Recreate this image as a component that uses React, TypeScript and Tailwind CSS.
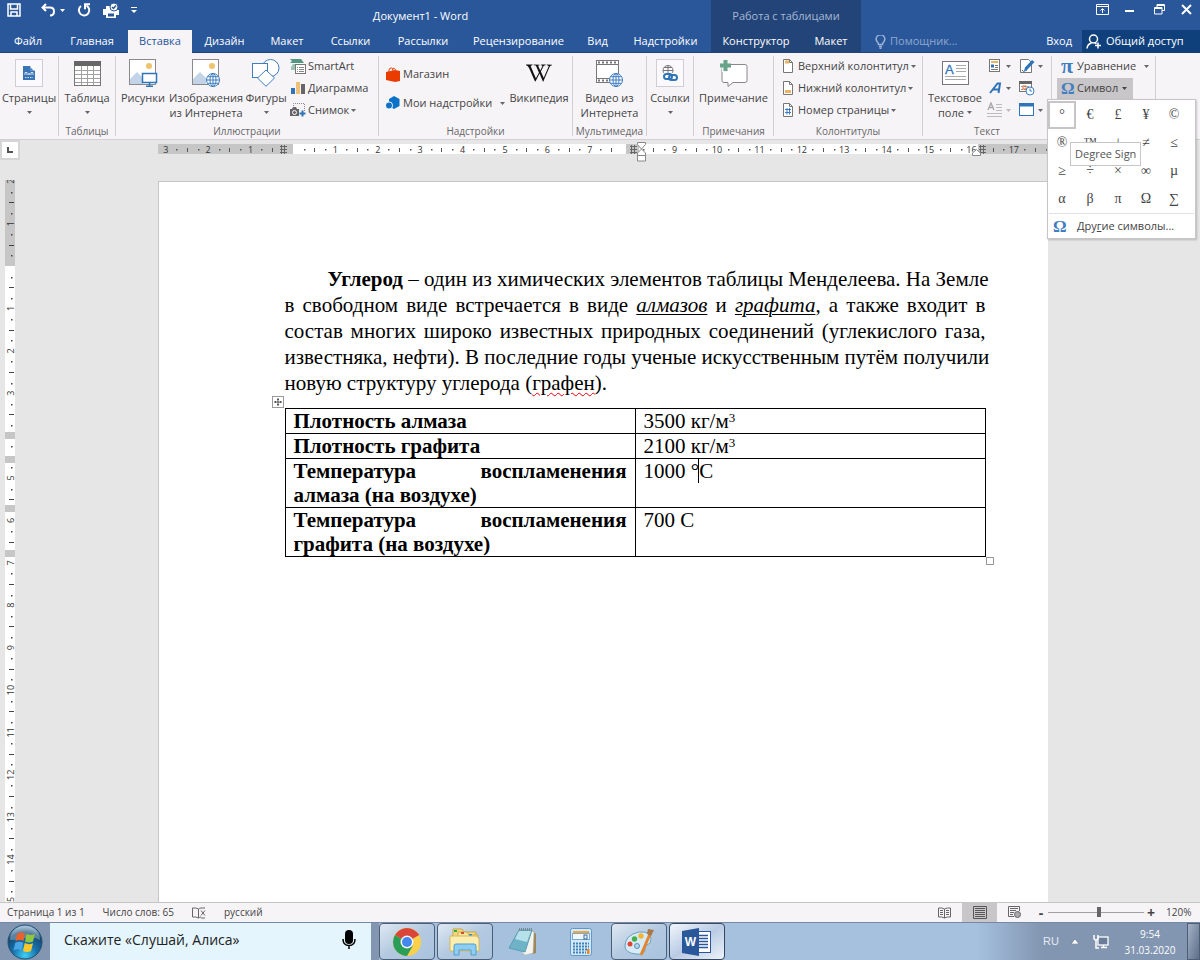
import type { ReactNode } from 'react'
import { FaWikipediaW } from 'react-icons/fa'

const tabs = [
  { name: 'Файл', width: 'w-[56px]' },
  { name: 'Главная', width: 'w-[72px]' },
  { name: 'Вставка', width: 'w-[64px]' },
  { name: 'Дизайн', width: 'w-[65px]' },
  { name: 'Макет', width: 'w-[60px]' },
  { name: 'Ссылки', width: 'w-[67px]' },
  { name: 'Рассылки', width: 'w-[78px]' },
  { name: 'Рецензирование', width: 'w-[113px]' },
  { name: 'Вид', width: 'w-[45px]' },
  { name: 'Надстройки', width: 'w-[91px]' },
]

const symbols = ['°', '€', '£', '¥', '©', '®', '™', '±', '≠', '≤', '≥', '÷', '×', '∞', 'µ', 'α', 'β', 'π', 'Ω', '∑']

const CM = 42.4

function Caret({ className = 'text-[#666]' }: { className?: string }) {
  return (
    <svg width="5" height="3" viewBox="0 0 5 3" className={`shrink-0 ${className}`} aria-hidden="true">
      <path d="M0 0h5L2.5 3z" fill="currentColor" />
    </svg>
  )
}

/* ---------- ribbon icons ---------- */

function PageIcon() {
  return (
    <span className="flex size-7 items-center justify-center border border-[#d0ced2] bg-[#fbf9fc]">
      <svg width="12" height="14" viewBox="0 0 12 14">
        <path d="M0 0h7l5 5v9H0z" fill="#3a75b5" />
        <path d="M7.5 0v4.5H12z" fill="#fff" />
        <path d="M7.5 1.5v3h3z" fill="#3a75b5" />
        <path d="M2 9V6.500h2V9M5 9l1-2 1 2M8 9V6.500h2V9" stroke="#cfe0f2" fill="none" />
        <path d="M2 11.500h8" stroke="#cfe0f2" strokeDasharray="1.500 1" />
      </svg>
    </span>
  )
}

function TableIcon() {
  return (
    <svg width="27" height="25" viewBox="0 0 27 25">
      <rect x="0.500" y="0.500" width="26" height="24" fill="#fff" stroke="#777" />
      <rect width="27" height="5" fill="#666" />
      <path d="M1 9.500h25M1 13.500h25M1 17.500h25M1 21.500h25M7.500 5v19M13.500 5v19M19.500 5v19" stroke="#a0a0a0" />
    </svg>
  )
}

function GlobeIcon({ x, y }: { x: number; y: number }) {
  return (
    <g transform={`translate(${x} ${y})`} stroke="#3f7ec0" fill="none">
      <circle cx="7" cy="7" r="6.500" fill="#fff" />
      <ellipse cx="7" cy="7" rx="3" ry="6.500" />
      <path d="M7 .5v13M.5 7h13M1.500 3.700h11M1.500 10.300h11" />
    </g>
  )
}

function PictureIcon({ online = false }: { online?: boolean }) {
  return (
    <svg width="29" height="28" viewBox="0 0 29 28">
      <rect x="0.500" y="0.500" width="26" height="25" fill="#fff" stroke="#8a8a8a" />
      <path d="M1 25v-5l7-7 6 6v6z" fill="#c3d4e8" />
      <circle cx="20" cy="7" r="3" fill="#efc36c" />
      {online ? (
        <GlobeIcon x={14} y={14} />
      ) : (
        <g>
          <rect x="13.500" y="14.500" width="14" height="9" fill="#fff" stroke="#2f74b8" strokeWidth="1.500" />
          <path d="M20.500 24v3M17 27.200h7" stroke="#2f74b8" strokeWidth="1.500" />
        </g>
      )}
    </svg>
  )
}

function ShapesIcon() {
  return (
    <svg width="28" height="28" viewBox="0 0 28 28" fill="#fff" stroke="#3f7ec0">
      <circle cx="18.500" cy="9" r="8.500" />
      <rect x="0.500" y="4.500" width="15" height="14" />
      <path d="M14 11l8.500 8L14 27.300 5.500 19z" />
    </svg>
  )
}

function SmartArtIcon() {
  return (
    <svg width="16" height="16" viewBox="0 0 16 16">
      <path d="M0 1h11l3 4H0l2-2z" fill="#52977e" />
      <path d="M1 9l2-3h4v6H1z" fill="#9cc5b3" />
      <rect x="5.500" y="6.500" width="10" height="9" fill="#fff" stroke="#777" />
      <path d="M7 9.500h1m1 0h5M7 11.500h1m1 0h5M7 13.500h1m1 0h5" stroke="#888" />
    </svg>
  )
}

function ChartIcon() {
  return (
    <svg width="16" height="14" viewBox="0 0 16 14">
      <rect x="1" y="7" width="4" height="6" fill="#2f74b8" />
      <rect x="6" y="1" width="4" height="12" fill="#efc07a" />
      <rect x="11" y="3" width="4" height="10" fill="#666" />
    </svg>
  )
}

function ScreenshotIcon() {
  return (
    <svg width="16" height="14" viewBox="0 0 16 14">
      <path d="M3.500 5V.5h11V8" fill="none" stroke="#888" strokeDasharray="1 1" />
      <path d="M0 6h2l1-2h3l1 2h2v7H0z" fill="#666" />
      <circle cx="4.500" cy="9.500" r="2" fill="#666" stroke="#fff" />
      <path d="M12.500 7.500v6M9.500 10.500h6" stroke="#2f74b8" strokeWidth="2" />
    </svg>
  )
}

function StoreIcon() {
  return (
    <svg width="14" height="15" viewBox="0 0 14 15">
      <path d="M0 5l9-2 5 1v10l-5 1-9-2z" fill="#eb3c00" />
      <path d="M3 5V3q0-2 2.500-2Q7 1 7 4M6 2q3-2 3.500 1.500" fill="none" stroke="#eb3c00" />
    </svg>
  )
}

function AddinsIcon() {
  return (
    <svg width="14" height="14" viewBox="0 0 14 14">
      <path d="M8 0l5.500 3v7L8 13 3 10V3z" fill="#0b72c8" />
      <circle cx="3" cy="9.500" r="3.600" fill="#0b72c8" stroke="#f7f4f8" />
    </svg>
  )
}

function VideoIcon() {
  return (
    <svg width="28" height="28" viewBox="0 0 28 28">
      <rect x="0.500" y="1.500" width="22" height="22" fill="#fff" stroke="#777" />
      <path d="M1 5.500h21M1 19.500h21" stroke="#777" />
      <path d="M2 3.500h20M2 21.500h20" stroke="#777" strokeWidth="2" strokeDasharray="2 2" />
      <GlobeIcon x={13} y={14} />
    </svg>
  )
}

function LinksIcon() {
  return (
    <span className="flex size-7 items-center justify-center border border-[#d0ced2] bg-[#fbf9fc]">
      <svg width="16" height="16" viewBox="0 0 16 16" fill="none">
        <circle cx="6" cy="5.500" r="5" stroke="#777" />
        <path d="M6 .5v10M1 5.500h10M2 2.500h8M2 8.500h8" stroke="#777" />
        <path d="M1 8h15v8H1z" fill="#fbf9fc" />
        <rect x="2" y="9" width="8" height="5" rx="2.500" stroke="#2f74b8" strokeWidth="2" />
        <rect x="7" y="10" width="8" height="5" rx="2.500" stroke="#2f74b8" strokeWidth="2" />
      </svg>
    </span>
  )
}

function CommentIcon() {
  return (
    <svg width="30" height="28" viewBox="0 0 30 28">
      <path d="M4 5.500h22q2 0 2 2v14q0 2-2 2H14l-5 4v-4H5q-2 0-2-2v-14z" fill="#fff" stroke="#888" />
      <path d="M6 0v13M0 6.500h12" stroke="#f7f4f8" strokeWidth="6" />
      <path d="M6.500 1v11M1 6.500h11" stroke="#66a48c" strokeWidth="4" />
    </svg>
  )
}

function SheetIcon({ kind }: { kind: 'header' | 'footer' | 'number' }) {
  return (
    <svg width="12" height="14" viewBox="0 0 12 14">
      <path d="M1.500.5h6l3 3v10h-9z" fill="#fff" stroke="#777" />
      <path d="M7.500.5v3h3" fill="none" stroke="#777" />
      {kind === 'header' && <path d="M3 3h4" stroke="#e9b561" strokeWidth="3" />}
      {kind === 'footer' && <path d="M3 10.500h6" stroke="#e9b561" strokeWidth="3" />}
      {kind === 'number' && <path d="M3 6.500h6M3 9.500h6M5 5v6.500M7.500 5v6.500" stroke="#3f7ec0" />}
    </svg>
  )
}

function TextBoxIcon() {
  return (
    <svg width="27" height="24" viewBox="0 0 27 24">
      <rect x="0.500" y="0.500" width="26" height="23" fill="#fff" stroke="#777" />
      <path d="M14 4.500h10M14 7.500h10M14 10.500h10M3 15.500h21M3 18.500h21" stroke="#aaa" />
      <text x="3" y="13" fontSize="13" fill="#2f74b8" stroke="#2f74b8" strokeWidth="0.300" fontFamily="Liberation Sans, sans-serif">A</text>
    </svg>
  )
}

function QuickPartsIcon() {
  return (
    <svg width="12" height="14" viewBox="0 0 12 14">
      <rect x="0.500" y="0.500" width="10" height="12" fill="#fff" stroke="#777" />
      <path d="M2 3h7" stroke="#e9b561" strokeWidth="2" />
      <path d="M2 7h3" stroke="#2f74b8" strokeWidth="3" />
      <path d="M6 6.500h3M6 8.500h3M2 10.500h7" stroke="#777" />
    </svg>
  )
}

function SignatureIcon() {
  return (
    <svg width="16" height="16" viewBox="0 0 16 16">
      <path d="M1.500 1.500h8l3 3v10h-11z" fill="#fff" stroke="#777" />
      <path d="M5 13l1-3.500L13 2l2.500 2L8 12z" fill="#2f74b8" />
      <path d="M3 12l1.500 1.500L8 12" fill="none" stroke="#2f74b8" />
    </svg>
  )
}

function DateIcon() {
  return (
    <svg width="16" height="16" viewBox="0 0 16 16">
      <rect x="0.500" y="1.500" width="12" height="10" fill="#fff" stroke="#777" />
      <path d="M0 2.500h13" stroke="#666" strokeWidth="3" />
      <path d="M2 6.500h9M2 9.500h6" stroke="#999" strokeDasharray="2 1" />
      <rect x="4" y="6" width="3" height="3" fill="none" stroke="#e07038" />
      <circle cx="11" cy="11" r="4" fill="#fff" stroke="#3f7ec0" />
      <path d="M11 8.500V11h2" fill="none" stroke="#3f7ec0" />
    </svg>
  )
}

function WordArtIcon() {
  return (
    <svg width="13" height="14" viewBox="0 0 13 14">
      <path d="M1 12L8.500 2.500H11L9.500 12M3.500 8.500H10" fill="none" stroke="#2f74b8" strokeWidth="2" />
    </svg>
  )
}

function DropCapIcon() {
  return (
    <svg width="16" height="16" viewBox="0 0 16 16">
      <path d="M1 8l3-7 3 7M2 5.500h4" fill="none" stroke="#a5a5a5" strokeWidth="1.300" />
      <path d="M9 2.500h6M9 5.500h6M9 8.500h6M0 11.500h15M0 14.500h15" stroke="#bcbcbc" />
    </svg>
  )
}

function ObjectIcon() {
  return (
    <svg width="16" height="14" viewBox="0 0 16 14">
      <rect x="0.500" y="0.500" width="14" height="12" fill="#fff" stroke="#2f74b8" />
      <path d="M0 2h15" stroke="#2f74b8" strokeWidth="3" />
    </svg>
  )
}

/* ---------- ribbon building blocks ---------- */

function Group({ label, className, children }: { label: string; className: string; children: ReactNode }) {
  return (
    <section className={`flex h-20 shrink-0 flex-col border-r border-[#d2cfd3] ${className}`}>
      <div className="flex flex-1">{children}</div>
      <div className="text-center text-[10px] leading-[10px] whitespace-nowrap text-[#666]">{label}</div>
    </section>
  )
}

interface BigButtonProps {
  icon: ReactNode
  lines: string[]
  className: string
  caret?: 'below' | 'inline'
}

function BigButton({ icon, lines, className, caret }: BigButtonProps) {
  return (
    <button className={`flex shrink-0 flex-col items-center ${className}`}>
      <span className="flex h-[34px] shrink-0 items-center justify-center">{icon}</span>
      {lines.map((line, i) => (
        <span key={line} className="flex items-center gap-[3px] leading-[15px] whitespace-nowrap">
          {line}
          {caret === 'inline' && i === lines.length - 1 && <Caret />}
        </span>
      ))}
      {caret === 'below' && <span className="flex h-[15px] items-center"><Caret /></span>}
    </button>
  )
}

function SmallButton({ icon, label, caret = false }: { icon: ReactNode; label: string; caret?: boolean }) {
  return (
    <button className="flex h-5 items-center gap-[2px] whitespace-nowrap">
      <span className="flex w-4 justify-center">{icon}</span>
      {label}
      {caret && <Caret />}
    </button>
  )
}

function IconButton({ icon, label, caret = true, faded = false }: { icon: ReactNode; label: string; caret?: boolean; faded?: boolean }) {
  return (
    <button aria-label={label} className="flex h-5 w-8 items-center justify-between pr-2">
      <span className="flex w-4 justify-center">{icon}</span>
      {caret && <Caret className={faded ? 'text-[#bbb]' : 'text-[#666]'} />}
    </button>
  )
}

/* ---------- header ---------- */

function QuickAccess() {
  return (
    <div className="flex w-[130px] items-start gap-3 pt-[3px] pl-[7px]">
      <button aria-label="Сохранить">
        <svg width="14" height="14" viewBox="0 0 14 14" fill="none" stroke="#fff" strokeWidth="1.500">
          <path d="M1 1h12v12H1zM3.500 1v5h7V1M4 13V9h6v4" />
        </svg>
      </button>
      <button aria-label="Отменить" className="ml-2 flex items-center gap-1">
        <svg width="15" height="14" viewBox="0 0 15 14" fill="none" stroke="#fff" strokeWidth="2">
          <path d="M5 1L1.500 4.500 5 8M2 4.500h7q4 0 4 4t-4 4" />
        </svg>
        <Caret className="text-white" />
      </button>
      <button aria-label="Повторить">
        <svg width="14" height="14" viewBox="0 0 14 14" fill="none" stroke="#fff" strokeWidth="2">
          <path d="M4 3a5.200 5.200 0 1 0 5.500-.4M13 1.200H8v5" />
        </svg>
      </button>
      <button aria-label="Печать">
        <svg width="16" height="15" viewBox="0 0 16 15">
          <path d="M0 6h3V3h5v4h8v5h-3v3H3v-3H0z" fill="#fff" />
          <path d="M5 10.500h6v3H5z" fill="#2a579a" />
          <circle cx="11" cy="4" r="4" fill="#fff" stroke="#2a579a" />
          <path d="M9 4l1.500 1.500L13 2.500" fill="none" stroke="#2a579a" strokeWidth="1.500" />
        </svg>
      </button>
      <button aria-label="Настройка панели" className="pt-1">
        <svg width="6" height="7" viewBox="0 0 6 7" fill="#fff">
          <path d="M0 0h6v1H0zM0 3h6L3 6z" />
        </svg>
      </button>
    </div>
  )
}

function Header() {
  return (
    <header className="flex h-[53px] shrink-0 bg-[#2a579a] text-white">
      <div className="shrink-0">
        <div className="flex h-[30px]">
          <QuickAccess />
          <h1 className="flex-1 pt-2 text-center leading-4">Документ1 - Word</h1>
        </div>
        <nav className="flex h-[23px] shadow-[inset_0_-1px_0_#1e4480]">
          {tabs.map((tab) => (
            <button
              key={tab.name}
              className={`text-center ${tab.width} ${tab.name === 'Вставка' ? 'bg-[#f7f4f8] text-[#2a579a]' : ''}`}
            >
              {tab.name}
            </button>
          ))}
        </nav>
      </div>
      <div className="w-[150px] shrink-0 bg-[#224478]">
        <div className="h-[30px] pt-2 text-center leading-4 text-[#a6b8d4]">Работа с таблицами</div>
        <div className="flex h-[23px]">
          <button className="w-[90px]">Конструктор</button>
          <button className="w-[60px]">Макет</button>
        </div>
      </div>
      <div className="flex min-w-0 flex-1 flex-col">
        <div className="flex h-[30px] items-start justify-end gap-4 pt-1 pr-2">
          <button aria-label="Параметры ленты">
            <svg width="13" height="11" viewBox="0 0 13 11" fill="none" stroke="#fff">
              <path d="M.5.5h12v10H.5zM.5 2.500h12M6.500 9V5M4.500 6.500l2-2 2 2" />
            </svg>
          </button>
          <button aria-label="Свернуть" className="pt-[6px]">
            <svg width="9" height="3" viewBox="0 0 9 3"><path d="M0 0h9v2H0z" fill="#fff" /></svg>
          </button>
          <button aria-label="Свернуть в окно" className="ml-1">
            <svg width="11" height="11" viewBox="0 0 11 11" fill="none" stroke="#fff">
              <path d="M3 3V.5h7.500v6H8M3 1.500h7M.5 3.500h7.500v6.500H.5zM.5 4.500H8" />
            </svg>
          </button>
          <button aria-label="Закрыть">
            <svg width="11" height="11" viewBox="0 0 11 11"><path d="M1 1l9 9M10 1l-9 9" stroke="#fff" strokeWidth="2" /></svg>
          </button>
        </div>
        <div className="flex h-[23px] items-center shadow-[inset_0_-1px_0_#1e4480]">
          <label className="flex flex-1 items-center gap-1 pl-[14px]">
            <svg width="11" height="14" viewBox="0 0 11 14" fill="none" stroke="#9fb4d4" strokeWidth="1.500">
              <path d="M3.500 9.500Q3.500 8 2 6.500 1 5 1.200 4A4.200 4.200 0 0 1 9.800 4Q10 5 9 6.500 7.500 8 7.500 9.500zM4 11.500h3M4.500 13.200h2" />
            </svg>
            <input
              aria-label="Помощник"
              placeholder="Помощник..."
              className="w-24 bg-transparent outline-none placeholder:text-[#8fa8cf]"
            />
          </label>
          <button className="px-[10px]">Вход</button>
          <button className="flex h-full w-[118px] items-center gap-1 bg-[#10407c] pl-1 whitespace-nowrap">
            <svg width="16" height="15" viewBox="0 0 16 15" fill="none" stroke="#fff" strokeWidth="1.500">
              <circle cx="7.500" cy="5" r="4" />
              <path d="M1 14.500q.5-4.500 4.500-5.500M9 9l1.500 1M12 8.500v6M9 11.500h6" />
            </svg>
            Общий доступ
          </button>
        </div>
      </div>
    </header>
  )
}

function SymbolMenu() {
  return (
    <div className="absolute top-[21px] -left-[10px] z-20 w-[149px] border border-[#c6c6c6] bg-white shadow-[1px_1px_2px_#0003]">
      <div className="grid grid-cols-[repeat(5,28px)] pt-px font-['Liberation_Serif',serif] text-[14px]">
        {symbols.map((s) => (
          <button
            key={s}
            className={`h-7 leading-none text-[#444] ${s === '°' ? 'border-2 border-[#c6c6c6] bg-white' : ''}`}
          >
            {s}
          </button>
        ))}
      </div>
      <button className="mx-px flex h-[25px] w-[145px] items-center border-t border-[#e1e1e1] pl-1">
        <span className="w-6 text-left font-['Liberation_Serif',serif] text-[17px] leading-none font-bold text-[#3f7ec0]">Ω</span>
        <span>Дру<u>г</u>ие символы...</span>
      </button>
      <div role="tooltip" className="absolute top-[42px] left-[22px] border border-[#c6c6c6] bg-white px-1 py-[3px] leading-4 whitespace-nowrap text-[#555]">
        Degree Sign
      </div>
    </div>
  )
}

function Ribbon() {
  return (
    <div className="flex h-[87px] shrink-0 border-b border-[#d2d0d3] bg-[#f7f4f8] pt-[3px] text-[#444]">
      <Group label="" className="w-[59px]">
        <BigButton icon={<PageIcon />} lines={['Страницы']} caret="below" className="w-[58px]" />
      </Group>
      <Group label="Таблицы" className="w-[57px]">
        <BigButton icon={<TableIcon />} lines={['Таблица']} caret="below" className="w-[56px]" />
      </Group>
      <Group label="Иллюстрации" className="w-[263px]">
        <BigButton icon={<PictureIcon />} lines={['Рисунки']} className="w-[54px]" />
        <BigButton icon={<PictureIcon online />} lines={['Изображения', 'из Интернета']} className="w-[72px]" />
        <BigButton icon={<ShapesIcon />} lines={['Фигуры']} caret="below" className="w-[48px]" />
        <div className="flex flex-col gap-[2px]">
          <SmallButton icon={<SmartArtIcon />} label="SmartArt" />
          <SmallButton icon={<ChartIcon />} label="Диаграмма" />
          <SmallButton icon={<ScreenshotIcon />} label="Снимок" caret />
        </div>
      </Group>
      <Group label="Надстройки" className="w-[194px]">
        <div className="flex w-[130px] flex-col gap-[9px] pt-2 pl-[6px]">
          <SmallButton icon={<StoreIcon />} label="Магазин" />
          <div className="flex items-center justify-between pr-1">
            <SmallButton icon={<AddinsIcon />} label="Мои надстройки" />
            <Caret />
          </div>
        </div>
        <BigButton icon={<FaWikipediaW size={26} color="#111" />} lines={['Википедия']} className="w-[60px]" />
      </Group>
      <Group label="Мультимедиа" className="w-[74px]">
        <BigButton icon={<VideoIcon />} lines={['Видео из', 'Интернета']} className="w-[73px]" />
      </Group>
      <Group label="" className="w-[47px]">
        <BigButton icon={<LinksIcon />} lines={['Ссылки']} caret="below" className="w-[46px]" />
      </Group>
      <Group label="Примечания" className="w-[80px]">
        <BigButton icon={<CommentIcon />} lines={['Примечание']} className="w-[79px]" />
      </Group>
      <Group label="Колонтитулы" className="w-[149px]">
        <div className="flex flex-col gap-[2px] pl-[6px]">
          <SmallButton icon={<SheetIcon kind="header" />} label="Верхний колонтитул" caret />
          <SmallButton icon={<SheetIcon kind="footer" />} label="Нижний колонтитул" caret />
          <SmallButton icon={<SheetIcon kind="number" />} label="Номер страницы" caret />
        </div>
      </Group>
      <Group label="Текст" className="w-[129px]">
        <BigButton icon={<TextBoxIcon />} lines={['Текстовое', 'поле']} caret="inline" className="w-[64px]" />
        <div className="grid grid-cols-2 grid-rows-[20px_20px_20px] gap-y-[2px]">
          <IconButton icon={<QuickPartsIcon />} label="Экспресс-блоки" />
          <IconButton icon={<SignatureIcon />} label="Строка подписи" />
          <IconButton icon={<WordArtIcon />} label="WordArt" />
          <IconButton icon={<DateIcon />} label="Дата и время" caret={false} />
          <IconButton icon={<DropCapIcon />} label="Буквица" faded />
          <IconButton icon={<ObjectIcon />} label="Объект" />
        </div>
      </Group>
      <Group label="" className="w-[104px]">
        <div className="flex flex-col gap-[2px] pl-[5px]">
          <button className="flex h-5 items-center gap-1 pl-1">
            <span className="w-3 font-['Liberation_Serif',serif] text-[22px] leading-none font-bold text-[#3f7ec0]">π</span>
            Уравнение
            <Caret className="ml-1 text-[#666]" />
          </button>
          <div className="relative">
            <button className="flex h-[21px] w-[76px] items-center gap-1 bg-[#c8c6c9] pl-1">
              <span className="w-3 font-['Liberation_Serif',serif] text-[17px] leading-none font-bold text-[#3f7ec0]">Ω</span>
              Символ
              <Caret className="text-[#444]" />
            </button>
            <SymbolMenu />
          </div>
        </div>
      </Group>
    </div>
  )
}

/* ---------- rulers ---------- */

interface RulerMark {
  pos: number
  kind: 'dot' | 'tick' | 'number'
  text?: string
}

function rulerMarks(zero: number, length: number, skip: number[]): RulerMark[] {
  const marks: RulerMark[] = []
  for (let q = -16; q < 80; q++) {
    const pos = zero + (q * CM) / 4
    if (q === 0 || pos < 1 || pos > length - 2 || skip.includes(q)) continue
    if (q % 4 === 0) marks.push({ pos, kind: 'number', text: String(Math.abs(q / 4)) })
    else marks.push({ pos, kind: q % 2 === 0 ? 'tick' : 'dot' })
  }
  return marks
}

function Grip({ x }: { x: number }) {
  return (
    <path d={`M${x} 6.500h7M${x} 9.500h7M${x} 12.500h7M${x + 1.5} 5v9M${x + 4.5} 5v9`} stroke="#666" fill="none" />
  )
}

function HorizontalRuler() {
  return (
    <svg width="890" height="22" viewBox="0 0 890 22" className="shrink-0">
      <rect y="4" width="135" height="10" fill="#c6c6c6" />
      <rect x="135" y="4" width="685" height="10" fill="#fff" />
      <rect x="468" y="4" width="13" height="10" fill="#c6c6c6" />
      <rect x="820" y="4" width="70" height="10" fill="#c6c6c6" />
      {rulerMarks(135, 890, [-1, 31, 32, 65]).map((m) =>
        m.kind === 'number' ? (
          <text key={m.pos} x={m.pos} y="13" textAnchor="middle" fontSize="9" fill="#333">{m.text}</text>
        ) : m.kind === 'tick' ? (
          <path key={m.pos} d={`M${Math.round(m.pos) + 0.5} 8v4`} stroke="#555" />
        ) : (
          <rect key={m.pos} x={Math.round(m.pos)} y="9" width="1.500" height="1.500" fill="#555" />
        ),
      )}
      <Grip x={122} />
      <Grip x={472} />
      <Grip x={821} />
      <path d="M479.500 2.500h8v2l-4 4.500 4 4v8h-8v-8l4-4-4-4.500zM479.500 15.500h8" fill="#fff" stroke="#888" />
      <path d="M814.500 15.500v-2.500l4-3.500 4 3.500v2.500z" fill="#fff" stroke="#888" />
    </svg>
  )
}

function VerticalRuler() {
  return (
    <svg width="10" height="722" viewBox="0 0 10 722">
      <rect width="10" height="722" fill="#fff" />
      <rect width="10" height="86" fill="#c6c6c6" />
      {[252, 276, 325, 370].map((y) => (
        <rect key={y} y={y} width="10" height="7" fill="#c6c6c6" />
      ))}
      {rulerMarks(86, 726, [16, 18, 23, 27]).map((m) =>
        m.kind === 'number' ? (
          <text
            key={m.pos}
            textAnchor="middle"
            fontSize="9"
            fill="#333"
            transform={`translate(9 ${m.pos}) rotate(-90)`}
          >
            {m.text}
          </text>
        ) : m.kind === 'tick' ? (
          <path key={m.pos} d={`M4 ${Math.round(m.pos) + 0.5}h5`} stroke="#444" />
        ) : (
          <rect key={m.pos} x="6" y={Math.round(m.pos)} width="1.500" height="1.500" fill="#444" />
        ),
      )}
    </svg>
  )
}

/* ---------- document ---------- */

function DocumentPage() {
  const rows: { name: string; value: ReactNode }[] = [
    { name: 'Плотность алмаза', value: <>3500 кг/м<sup className="text-[13px]">3</sup></> },
    { name: 'Плотность графита', value: <>2100 кг/м<sup className="text-[13px]">3</sup></> },
    {
      name: 'Температура воспламенения алмаза (на воздухе)',
      value: <>1000 °<span className="-ml-px border-l border-black">С</span></>,
    },
    { name: 'Температура воспламенения графита (на воздухе)', value: '700 С' },
  ]

  return (
    <article className="w-[890px] shrink-0 border-t border-l border-[#c6c6c6] bg-white pt-[84px] pr-[62px] pl-[126px] font-['Liberation_Serif',serif] text-[21px] text-black">
      <p className="leading-[26px] whitespace-nowrap [&>span]:block [&>span]:[text-align-last:justify]">
        <span className="pl-[43px]"><b>Углерод</b> – один из химических элементов таблицы Менделеева. На Земле</span>
        <span>
          в свободном виде встречается в виде <i className="underline decoration-1 underline-offset-2">алмазов</i> и{' '}
          <i className="underline decoration-1 underline-offset-2">графита</i>, а также входит в
        </span>
        <span>состав многих широко известных природных соединений (углекислого газа,</span>
        <span>известняка, нефти). В последние годы ученые искусственным путём получили</span>
        новую структуру углерода (
        <u className="decoration-red-600 decoration-wavy decoration-1 underline-offset-2">графен</u>).
      </p>
      <div className="relative mt-3">
        <span className="absolute -top-3 -left-[13px] flex size-3 items-center justify-center border border-[#999] bg-white">
          <svg width="8" height="8" viewBox="0 0 8 8" fill="none" stroke="#555">
            <path d="M4 0v8M0 4h8M3 1.500h2M3 6.500h2M1.500 3v2M6.500 3v2" />
          </svg>
        </span>
        <table className="w-full table-fixed border-collapse text-left leading-6">
          <tbody>
            {rows.map((row) => (
              <tr key={row.name}>
                <th scope="row" className="border border-black px-2 py-0 text-justify align-top font-bold">{row.name}</th>
                <td className="border border-black px-2 py-0 align-top [&_sup]:leading-none">{row.value}</td>
              </tr>
            ))}
          </tbody>
        </table>
        <span className="absolute top-full left-full size-2 border border-[#999] bg-white" />
      </div>
    </article>
  )
}

/* ---------- bottom bars ---------- */

function StatusBar() {
  return (
    <footer className="flex h-5 shrink-0 items-center border-t border-[#c6c6c6] bg-[#f7f4f8] text-[10px] whitespace-nowrap text-[#444]">
      <div className="flex flex-1 items-center gap-[18px] pl-[7px]">
        <span>Страница 1 из 1</span>
        <span>Число слов: 65</span>
        <svg width="14" height="12" viewBox="0 0 14 12" fill="none" stroke="#666">
          <path d="M6.500 2Q4 .5.500 1v9q3.500-.5 6 1 1-.8 2.500-1M6.500 2v9M6.500 2q1-.8 2.500-1h4M9 3.500l4 5M13 3.500l-4 5M9 11h4" />
        </svg>
        <span>русский</span>
      </div>
      <button aria-label="Режим чтения" className="flex h-full w-[35px] items-center justify-center">
        <svg width="13" height="12" viewBox="0 0 13 12" fill="none" stroke="#666">
          <path d="M6.500 2Q4 .5.500 1v9q3.500-.5 6 1 2.500-1.500 6-1V1q-3.500-.5-6 1v9M2 3.500h3M2 5.500h3M2 7.500h3M8 3.500h3M8 5.500h3M8 7.500h3" />
        </svg>
      </button>
      <button aria-label="Разметка страницы" className="flex h-full w-[35px] items-center justify-center bg-[#c8c6c9]">
        <svg width="14" height="13" viewBox="0 0 14 13" fill="none" stroke="#555">
          <path d="M.5.5h13v12H.5zM2 2.500h10M2 4.500h10M2 6.500h10M2 8.500h10M2 10.500h10" />
        </svg>
      </button>
      <button aria-label="Веб-документ" className="flex h-full w-[36px] items-center justify-center">
        <svg width="14" height="13" viewBox="0 0 14 13" fill="none" stroke="#666">
          <path d="M6 10.500H.5V.5h11V5M2 2.500h8M2 4.500h6M2 6.500h4M2 8.500h3" />
          <circle cx="9.500" cy="8.500" r="3" fill="#aaa" />
        </svg>
      </button>
      <div className="flex items-center gap-[3px] pr-2 pl-1">
        <button aria-label="Уменьшить" className="w-2 text-[14px] leading-none font-bold">-</button>
        <input
          type="range"
          aria-label="Масштаб"
          min={10}
          max={500}
          defaultValue={270}
          className="h-3 w-24 appearance-none bg-transparent [&::-webkit-slider-runnable-track]:h-px [&::-webkit-slider-runnable-track]:bg-[#a0a0a0] [&::-webkit-slider-thumb]:-mt-[5px] [&::-webkit-slider-thumb]:h-[10px] [&::-webkit-slider-thumb]:w-1 [&::-webkit-slider-thumb]:appearance-none [&::-webkit-slider-thumb]:bg-[#666]"
        />
        <button aria-label="Увеличить" className="w-2 text-[14px] leading-none font-bold">+</button>
        <span className="ml-2 w-[26px]">120%</span>
      </div>
    </footer>
  )
}

function StartOrb() {
  return (
    <svg width="36" height="36" viewBox="0 0 36 36">
      <defs>
        <radialGradient id="orb" cx="50%" cy="90%" r="90%">
          <stop offset="0" stopColor="#3fd0f4" />
          <stop offset="0.400" stopColor="#1672ac" />
          <stop offset="0.750" stopColor="#154872" />
          <stop offset="1" stopColor="#9cc3dc" />
        </radialGradient>
      </defs>
      <circle cx="18" cy="18" r="17" fill="url(#orb)" stroke="#244d72" />
      <path d="M3 16a15 14 0 0 1 30 0q-7-4-15-2T3 16z" fill="#fff" opacity="0.300" />
      <path d="M10 10q4-2.500 8-.5L16.500 17q-4-2-8 .3z" fill="#e8602c" />
      <path d="M19.500 10q4 2 8.500 0L26 17.500q-4 2-8 0z" fill="#8fc73e" />
      <path d="M8.200 19q4-2.200 8-.3l-1.700 7.500q-4-2-8 .3z" fill="#4aa6e8" />
      <path d="M17.700 19q4 2.200 8.300.2L24 27q-4 2-8 0z" fill="#fbc82b" />
    </svg>
  )
}

function TaskButton({ label, open = false, active = false, children }: { label: string; open?: boolean; active?: boolean; children: ReactNode }) {
  const look = active
    ? 'rounded-sm border border-[#36465e] bg-linear-to-br from-[#f2f6fb] via-[#b9cbe4] to-[#eef3fa]'
    : open
      ? 'rounded-sm border border-[#4c5d76] bg-linear-to-br from-[#dfe8f2] via-[#b3c9e0] to-[#a9c3df]'
      : ''
  return (
    <button aria-label={label} className={`flex w-14 items-center justify-center ${look}`}>
      {children}
    </button>
  )
}

function Taskbar() {
  return (
    <div className="flex h-[38px] shrink-0 border-t border-[#7688a5] bg-[#8295b1]">
      <button aria-label="Пуск" className="flex w-[50px] items-center justify-center">
        <StartOrb />
      </button>
      <label className="flex w-[321px] items-center bg-[#e5f5fd] pr-[15px] pb-1 pl-[14px]">
        <input
          aria-label="Поиск Алисы"
          placeholder="Скажите «Слушай, Алиса»"
          className="min-w-0 flex-1 bg-transparent text-[14px] outline-none placeholder:text-[#222]"
        />
        <svg width="14" height="20" viewBox="0 0 14 20">
          <rect x="3" width="8" height="14" rx="4" fill="#000" />
          <path d="M1 9q0 6.500 6 6.500T13 9M7 15v4" fill="none" stroke="#000" strokeWidth="1.500" />
        </svg>
      </label>
      <div className="ml-2 flex flex-1 gap-[2px] bg-linear-to-r from-[#a5c1de] from-90% to-[#8295b1]">
        <TaskButton label="Google Chrome" open>
          <svg width="28" height="28" viewBox="0 0 28 28">
            <circle cx="14" cy="14" r="14" fill="#fbd04b" />
            <path d="M14 14L1.900 7A14 14 0 0 1 26.100 7z" fill="#d9473a" />
            <path d="M14 7h12.100L24 4.500z" fill="#d9473a" />
            <path d="M1.900 7A14 14 0 0 0 14 28l6-10.500-6 2.500z" fill="#2a9d57" />
            <path d="M1.900 7L8 17.500 14 14z" fill="#2a9d57" />
            <circle cx="14" cy="14" r="6.500" fill="#f4f6f8" />
            <circle cx="14" cy="14" r="5" fill="#4587f0" />
          </svg>
        </TaskButton>
        <TaskButton label="Проводник" open>
          <svg width="32" height="30" viewBox="0 0 32 30">
            <path d="M4 2h9l2 3h12v16H4z" fill="#f2d97c" stroke="#c9a546" />
            <path d="M9 5h9l2 3h9v14H9z" fill="#f7e59a" stroke="#d0ad50" />
            <path d="M5 3h3v2H5z" fill="#2cae3b" />
            <path d="M12 5h3v2h-3z" fill="#d54a36" />
            <path d="M20 7h3v2h-3z" fill="#3a8fd8" />
            <path d="M1 9h27l2 3v12H1z" fill="#fbeeb0" stroke="#d8b95c" />
            <path d="M5 28v-9q0-2 2-2h18q2 0 2 2v9h-5v-5H10v5z" fill="#8fcdf0" stroke="#4d9fce" />
          </svg>
        </TaskButton>
        <TaskButton label="Блокнот">
          <svg width="30" height="30" viewBox="0 0 30 30">
            <path d="M25 4l3 3v19l-4 1z" fill="#9a8658" />
            <path d="M23 4l3 1-1 21-8 2-3-3z" fill="#f4f4ee" stroke="#b9b9ac" strokeWidth="0.500" />
            <path d="M11 3h13l-7 22L1 21z" fill="#6fb4c6" stroke="#5a9fb2" />
            <path d="M11 4h12l-4 11-12-3z" fill="#b5e2ea" />
            <path d="M11 2.500h13" stroke="#7a8a92" strokeWidth="3" strokeDasharray="1 1" />
          </svg>
        </TaskButton>
        <TaskButton label="Калькулятор">
          <svg width="22" height="28" viewBox="0 0 22 28">
            <rect x="0.500" y="0.500" width="21" height="27" rx="2" fill="#d4e8f8" stroke="#5c9acb" />
            <rect x="3" y="3" width="16" height="2" fill="#f0a63a" />
            <rect x="2.500" y="5.500" width="17" height="6" fill="#f1f8fd" stroke="#78a8cc" />
            <rect x="14" y="7" width="3" height="4" fill="none" stroke="#34679a" />
            <path d="M3 15.500h16M3 18.500h16M3 21.500h16M3 24.500h13" stroke="#3f83bd" strokeWidth="2" strokeDasharray="2 1" />
            <rect x="17" y="21" width="2.500" height="5" fill="#ee8a22" />
          </svg>
        </TaskButton>
        <TaskButton label="Paint" open>
          <svg width="30" height="30" viewBox="0 0 30 30">
            <path d="M1 19Q1 8 15 5q12-1 12 7 0 5-4 6-3 2-2 5-1 5-9 4Q1 26 1 19z" fill="#d7ebf6" stroke="#6d9fbd" />
            <circle cx="6" cy="17" r="2.500" fill="#e04534" />
            <circle cx="10.500" cy="12" r="2.700" fill="#43b04b" />
            <circle cx="17" cy="9" r="2.700" fill="#f2b632" />
            <circle cx="13" cy="19" r="2.500" fill="#b2d6ec" stroke="#5590b8" />
            <path d="M26 7l-9 21" stroke="#e2862e" strokeWidth="3" />
            <path d="M24 2l6 1-3 6-4-2z" fill="#a97848" />
          </svg>
        </TaskButton>
        <TaskButton label="Документ1 - Word" active>
          <svg width="30" height="28" viewBox="0 0 30 28">
            <rect x="14.500" y="3.500" width="14" height="21" fill="#fff" stroke="#2a579a" />
            <path d="M17 7.500h9M17 10.500h9M17 13.500h9M17 16.500h9M17 19.500h9" stroke="#2a579a" strokeWidth="1.500" />
            <path d="M0 3l17-3v28L0 25z" fill="#2a579a" />
            <text x="8.500" y="18" textAnchor="middle" fontSize="12" fontWeight="bold" fill="#fff" fontFamily="Liberation Sans, sans-serif">W</text>
          </svg>
        </TaskButton>
      </div>
      <div className="flex items-center text-[10px] text-white">
        <span className="w-[22px] font-['Liberation_Sans',sans-serif] text-[11px] text-[#e3eaf3]">RU</span>
        <button aria-label="Скрытые значки" className="flex w-5 justify-center">
          <svg width="8" height="5" viewBox="0 0 8 5"><path d="M4 0l4 5H0z" fill="#fff" stroke="#50607a" strokeWidth="0.500" /></svg>
        </button>
        <svg width="16" height="15" viewBox="0 0 16 15" className="ml-2">
          <rect x="5" y="3" width="10" height="8" fill="#6b7d98" stroke="#fff" strokeWidth="1.300" />
          <path d="M8 13.500h6M10.500 11v2" stroke="#fff" strokeWidth="1.500" />
          <path d="M1 1v3q0 2 2 2t2-2V1M3 6v8h3" fill="none" stroke="#fff" strokeWidth="1.500" />
        </svg>
        <div className="ml-2 w-[66px] text-center leading-4">
          <div>9:54</div>
          <div>31.03.2020</div>
        </div>
      </div>
      <button aria-label="Показать рабочий стол" className="ml-1 w-[13px] border border-[#4c5d76] bg-linear-to-br from-[#a3b2c6] to-[#5d6f89]" />
    </div>
  )
}

export default function App() {
  return (
    <div className="flex h-screen flex-col overflow-hidden bg-[#e6e6e6] font-['Open_Sans',sans-serif] text-[11px]">
      <Header />
      <Ribbon />
      <div className="flex shrink-0">
        <button aria-label="Табуляция" className="flex size-5 shrink-0 items-center justify-center border-2 border-[#d6d6d6] bg-white">
          <svg width="6" height="6" viewBox="0 0 6 6"><path d="M1 0v5h5" fill="none" stroke="#555" strokeWidth="2" /></svg>
        </button>
        <div className="flex h-5 flex-1 justify-center pr-[15px]">
          <HorizontalRuler />
        </div>
      </div>
      <main className="flex min-h-0 flex-1 overflow-hidden">
        <div className="w-5 shrink-0 pt-5 pl-[5px]">
          <VerticalRuler />
        </div>
        <div className="flex flex-1 justify-center pt-[21px] pr-[15px]">
          <DocumentPage />
        </div>
      </main>
      <StatusBar />
      <Taskbar />
    </div>
  )
}
